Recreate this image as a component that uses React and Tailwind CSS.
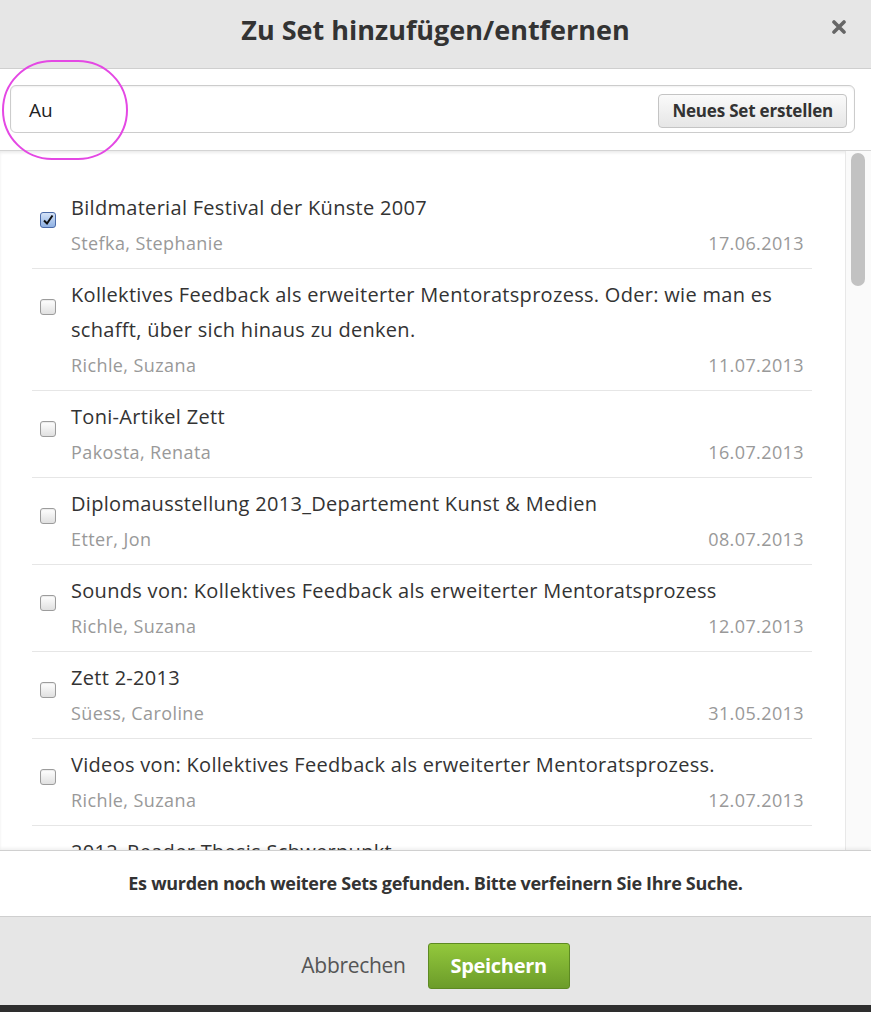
import React from "react";

const items = [
  { title: "Bildmaterial Festival der Künste 2007", author: "Stefka, Stephanie", date: "17.06.2013", checked: true },
  { title: "Kollektives Feedback als erweiterter Mentoratsprozess. Oder: wie man es schafft, über sich hinaus zu denken.", author: "Richle, Suzana", date: "11.07.2013" },
  { title: "Toni-Artikel Zett", author: "Pakosta, Renata", date: "16.07.2013" },
  { title: "Diplomausstellung 2013_Departement Kunst & Medien", author: "Etter, Jon", date: "08.07.2013" },
  { title: "Sounds von: Kollektives Feedback als erweiterter Mentoratsprozess", author: "Richle, Suzana", date: "12.07.2013" },
  { title: "Zett 2-2013", author: "Süess, Caroline", date: "31.05.2013" },
  { title: "Videos von: Kollektives Feedback als erweiterter Mentoratsprozess.", author: "Richle, Suzana", date: "12.07.2013" },
  { title: "2012_Reader Thesis Schwerpunkt", author: "Richle, Suzana", date: "12.07.2013" },
];

const Checkbox = ({ checked }) =>
  checked ? (
    <span className="block w-[16px] h-[16px] rounded-[3px] border border-[#4a6aa8] bg-gradient-to-b from-[#d5e3f7] to-[#8fb1e3] flex items-center justify-center">
      <svg width="12" height="12" viewBox="0 0 12 12">
        <path d="M2 6.5 L5 9.5 L10.5 1.5" fill="none" stroke="#111" strokeWidth="2" />
      </svg>
    </span>
  ) : (
    <span className="block w-[16px] h-[16px] rounded-[3px] border border-[#9c9c9c] bg-gradient-to-b from-white to-[#e0e0e0] shadow-[inset_0_1px_1px_rgba(0,0,0,0.08)]" />
  );

const SetItem = ({ item }) => (
  <div className="flex gap-[15px] pl-[8px] pr-[8px] pt-[8px] pb-[7px] border-b border-[#e6e6e6]">
    <div className="pt-[22px] shrink-0">
      <Checkbox checked={item.checked} />
    </div>
    <div className="flex-1 min-w-0">
      <div className="text-[20px] leading-[35px] tracking-[0.3px] text-[#333]">{item.title}</div>
      <div className="flex justify-between text-[18px] leading-[36px] tracking-[0.4px] text-[#999]">
        <span>{item.author}</span>
        <span>{item.date}</span>
      </div>
    </div>
  </div>
);

export default function App() {
  return (
    <div className="w-[871px] h-[1012px] bg-[#2e2e2e] font-['Open_Sans',sans-serif] relative overflow-hidden">
      <div className="h-[1005px] flex flex-col bg-white">
        {/* header */}
        <div className="h-[69px] shrink-0 bg-[#e6e6e6] border-b border-[#cfcfcf] relative flex items-center justify-center">
          <h3 className="text-[27px] font-bold text-[#333] pb-[8px]">Zu Set hinzufügen/entfernen</h3>
          <svg className="absolute right-[25px] top-[20px]" width="14" height="14" viewBox="0 0 14 14">
            <path d="M2 2 L12 12 M12 2 L2 12" stroke="#666" strokeWidth="3.6" strokeLinecap="round" />
          </svg>
        </div>

        {/* search */}
        <div className="h-[81px] shrink-0 pl-[10px] pr-[16px] pt-[16px]">
          <div className="h-[48px] rounded-[6px] border border-[#cccccc] shadow-[inset_0_1px_2px_rgba(0,0,0,0.06)] flex items-center pl-[18px] pr-[7px] pt-[3px]">
            <span className="flex-1 text-[19px] text-[#222]">Au</span>
            <button className="h-[34px] px-[13px] rounded-[4px] border border-[#c4c4c4] bg-gradient-to-b from-[#fafafa] to-[#e6e6e6] text-[17px] font-bold text-[#333] tracking-[-0.2px]">
              Neues Set erstellen
            </button>
          </div>
        </div>

        {/* list */}
        <div className="h-[700px] shrink-0 flex border-t border-[#d4d4d4] shadow-[inset_0_2px_3px_rgba(0,0,0,0.08)] overflow-hidden">
          <div className="flex-1 pl-[32px] pr-[33px] pt-[31px] overflow-hidden">
            {items.map((item, i) => (
              <SetItem key={i} item={item} />
            ))}
          </div>
          <div className="w-[26px] shrink-0 border-l border-[#e8e8e8] bg-[#fafafa] pt-[2px] pl-[5px]">
            <div className="w-[14px] h-[133px] rounded-full bg-[#c2c2c2]" />
          </div>
        </div>

        {/* notice */}
        <div className="h-[67px] shrink-0 border-t border-[#d0d0d0] shadow-[0_-2px_3px_rgba(0,0,0,0.06)] bg-white flex items-center justify-center border-b border-b-[#cfcfcf]">
          <p className="text-[18px] font-bold text-[#333] tracking-[-0.3px]">
            Es wurden noch weitere Sets gefunden. Bitte verfeinern Sie Ihre Suche.
          </p>
        </div>

        {/* footer */}
        <div className="flex-1 bg-[#e6e6e6] flex items-center justify-center gap-[22px] pt-[10px]">
          <span className="text-[21px] text-[#555] tracking-[-0.3px]">Abbrechen</span>
          <button className="w-[142px] h-[46px] rounded-[3px] border border-[#5d8a22] bg-gradient-to-b from-[#93c83c] to-[#6c9c2a] text-white text-[20px] font-bold tracking-[-0.3px]">
            Speichern
          </button>
        </div>
      </div>

      {/* annotation */}
      <div className="absolute left-[2px] top-[60px] w-[126px] h-[100px] rounded-full border-2 border-[#e448e4]" />
    </div>
  );
}
